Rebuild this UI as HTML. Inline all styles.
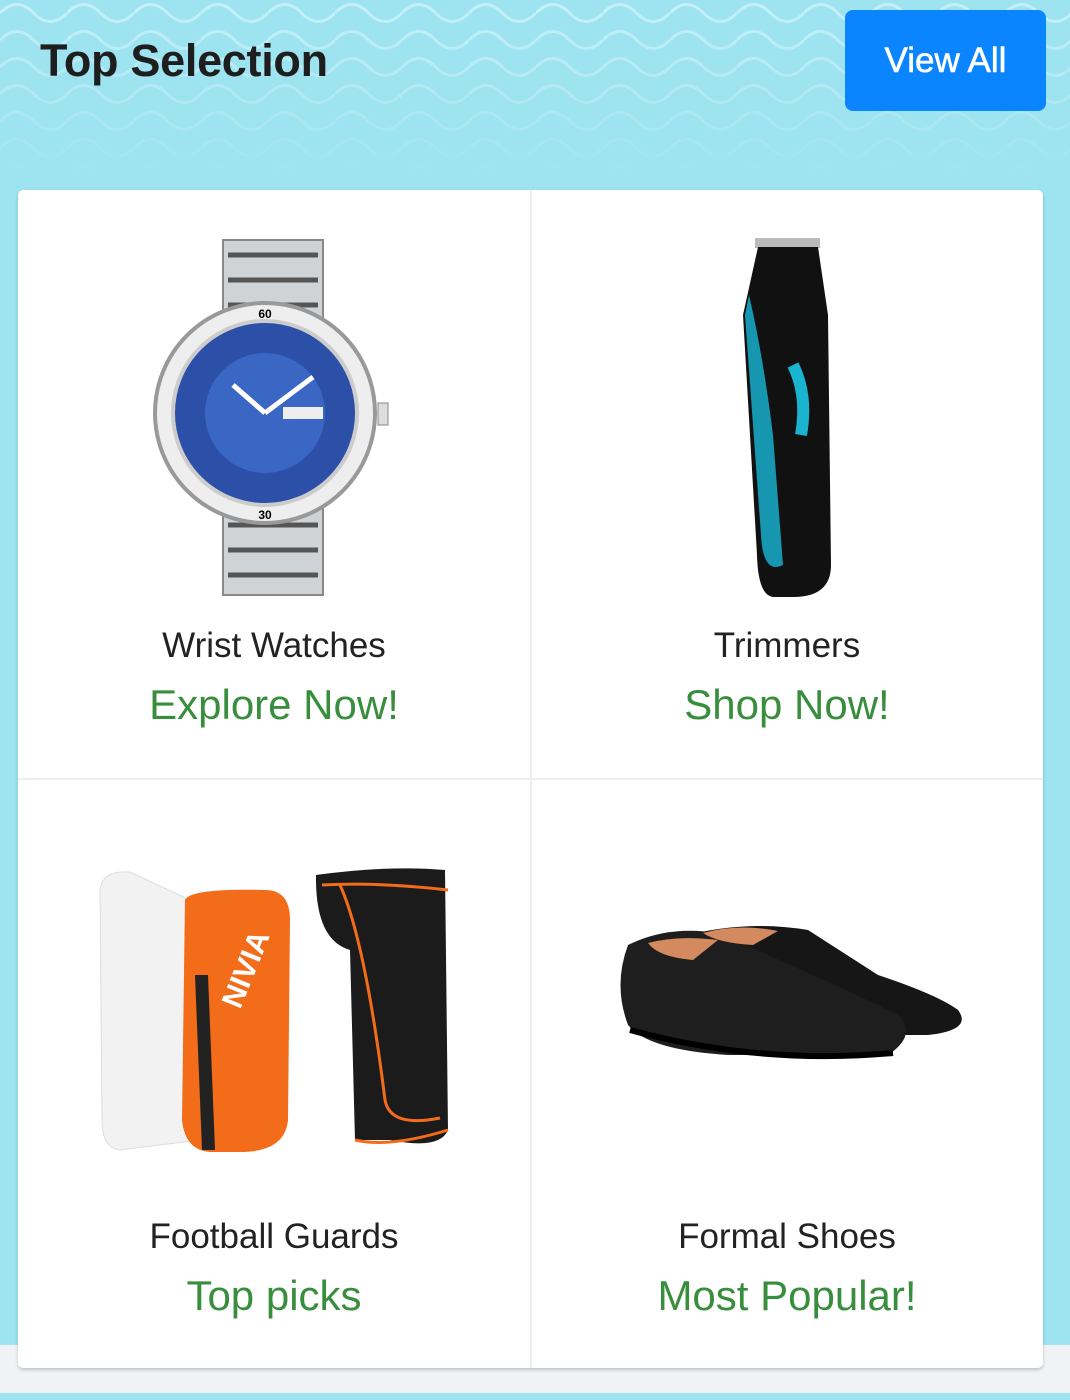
<!DOCTYPE html>
<html><head><meta charset="utf-8"><style>
html,body{margin:0;padding:0}
body{width:1070px;height:1400px;position:relative;overflow:hidden;background:#f0f2f5;font-family:"Liberation Sans",sans-serif}
.bg{position:absolute;left:0;top:0;width:1070px;height:1345px;background:#9ee3f0}
.bg2{position:absolute;left:0;top:1393px;width:1070px;height:7px;background:#9ee3f0}
h1{position:absolute;left:40px;top:35px;margin:0;font-size:45px;font-weight:bold;color:#1e1e1e;letter-spacing:-0.3px}
.btn{position:absolute;left:845px;top:10px;width:201px;height:101px;border-radius:8px;background:#0a84ff;color:#fff;font-size:35px;line-height:101px;text-align:center;font-weight:500;-webkit-text-stroke:0.6px #fff}
.card{position:absolute;left:18px;top:190px;width:1025px;height:1178px;background:#fff;border-radius:5px;box-shadow:0 2px 3px rgba(0,0,0,.2)}
.vl{position:absolute;left:512px;top:0;width:2px;height:1178px;background:#eee}
.hl{position:absolute;left:0;top:588px;width:1025px;height:2px;background:#eee}
.t{position:absolute;width:512px;text-align:center;font-size:35px;color:#222}
.g{position:absolute;width:512px;text-align:center;font-size:42px;color:#388e3c}
svg.p{position:absolute}
</style></head><body>
<div class="bg"></div><div class="bg2"></div>
<svg style="position:absolute;left:0;top:0" width="1070" height="180">
<defs><pattern id="w" width="67" height="27" patternUnits="userSpaceOnUse">
<path d="M0 13 Q16.75 -4 33.5 13 T67 13" fill="none" stroke="#c6f0f8" stroke-width="3"/></pattern>
<linearGradient id="f" x1="0" y1="0" x2="0" y2="1"><stop offset="0" stop-color="#fff" stop-opacity="1"/><stop offset="1" stop-color="#fff" stop-opacity="0"/></linearGradient>
<mask id="m"><rect width="1070" height="180" fill="url(#f)"/></mask></defs>
<rect width="1070" height="180" fill="url(#w)" mask="url(#m)"/></svg>
<h1>Top Selection</h1>
<div class="btn">View All</div>
<div class="card">
<div class="vl"></div><div class="hl"></div>
<svg class="p" style="left:135px;top:45px" width="240" height="365" viewBox="0 0 240 365">
<rect x="70" y="5" width="100" height="90" fill="#cfd3d6" stroke="#888" stroke-width="2"/>
<rect x="70" y="265" width="100" height="95" fill="#cfd3d6" stroke="#888" stroke-width="2"/>
<path d="M75 20h90M75 45h90M75 70h90M75 290h90M75 315h90M75 340h90" stroke="#555" stroke-width="5"/>
<circle cx="112" cy="178" r="110" fill="#eee" stroke="#999" stroke-width="4"/>
<circle cx="112" cy="178" r="92" fill="#2c4fa8" stroke="#ccc" stroke-width="4"/>
<circle cx="112" cy="178" r="60" fill="#3a66c4"/>
<rect x="225" y="168" width="10" height="22" fill="#ddd" stroke="#888"/>
<path d="M112 178L80 150M112 178L160 142" stroke="#fff" stroke-width="5"/>
<rect x="130" y="172" width="40" height="12" fill="#eee"/>
<text x="112" y="83" font-size="12" font-weight="bold" text-anchor="middle">60</text>
<text x="112" y="284" font-size="12" font-weight="bold" text-anchor="middle">30</text>
</svg>
<svg class="p" style="left:715px;top:45px" width="110" height="365" viewBox="0 0 110 365">
<rect x="22" y="3" width="65" height="10" fill="#bbb"/>
<path d="M25 12 L85 12 L95 80 L98 330 Q98 362 60 362 L40 362 Q25 360 24 320 L10 80 Z" fill="#111"/>
<path d="M16 60 Q30 120 40 200 L50 330 Q30 340 28 300 L12 80 Z" fill="#1796b0"/>
<path d="M60 130 Q75 160 68 200" stroke="#19b4d0" stroke-width="12" fill="none"/>
</svg>
<svg class="p" style="left:72px;top:670px" width="370" height="295" viewBox="0 0 370 295">
<path d="M10 30 Q12 10 40 12 L100 40 L110 280 L30 290 Q12 288 12 260 Z" fill="#f2f2f2" stroke="#ddd"/>
<path d="M95 40 Q100 28 175 30 Q200 30 200 60 L198 260 Q195 292 150 292 L120 292 Q95 290 92 260 Z" fill="#f26c1a"/>
<path d="M105 115 L118 115 L125 290 L112 290 Z" fill="#222"/>
<text x="150" y="150" font-size="30" font-weight="bold" fill="#fff" transform="rotate(-68 150 150)">NIVIA</text>
<path d="M226 15 Q300 5 355 10 L358 270 Q350 290 300 280 L265 280 L260 90 Q225 80 226 15Z" fill="#1b1b1b"/>
<path d="M232 25 Q290 22 358 30M265 280 Q300 288 358 270M250 25 Q275 80 295 240 Q300 268 350 258" stroke="#f26c1a" stroke-width="3" fill="none"/>
</svg>
<svg class="p" style="left:590px;top:725px" width="380" height="170" viewBox="0 0 380 170">
<path d="M80 20 Q140 5 200 15 L270 60 Q330 80 350 95 Q365 115 320 120 L200 120 L150 105 Z" fill="#161616"/>
<path d="M20 30 Q60 10 110 18 L160 40 Q250 80 290 100 Q310 120 280 140 L120 140 Q40 135 20 110 Q5 70 20 30Z" fill="#1e1e1e"/>
<path d="M40 28 Q70 20 110 25 L85 45 Q50 42 40 28Z" fill="#d38a5e"/>
<path d="M95 18 Q130 8 170 16 L145 30 Q110 28 95 18Z" fill="#d38a5e"/>
<path d="M22 115 Q150 150 285 138" stroke="#000" stroke-width="6" fill="none"/>
</svg>
<div class="t" style="left:0;top:436px">Wrist Watches</div>
<div class="g" style="left:0;top:491px">Explore Now!</div>
<div class="t" style="left:513px;top:436px">Trimmers</div>
<div class="g" style="left:513px;top:491px">Shop Now!</div>
<div class="t" style="left:0;top:1027px">Football Guards</div>
<div class="g" style="left:0;top:1082px">Top picks</div>
<div class="t" style="left:513px;top:1027px">Formal Shoes</div>
<div class="g" style="left:513px;top:1082px">Most Popular!</div>
</div>
</body></html>
